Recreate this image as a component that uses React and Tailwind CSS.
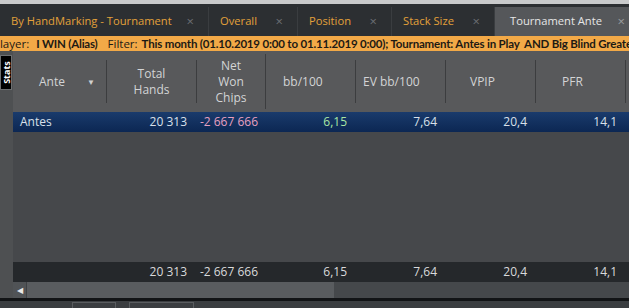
import React from "react";

const TABS = [
  { label: "By HandMarking - Tournament", w: 209 },
  { label: "Overall", w: 89 },
  { label: "Position", w: 94 },
  { label: "Stack Size", w: 103 },
];

function Close({ active }) {
  return (
    <span className={`text-[13px] leading-none ${active ? "text-[#9a9c9e]" : "text-[#6b6e72]"}`}>×</span>
  );
}

function ValueRow({ className, label, net, bb }) {
  return (
    <div className={`flex h-5 items-center text-[12px] ${className}`}>
      <div className="w-[94px] pl-[7px]">{label}</div>
      <div className="w-[90px] pr-[10px] text-right">20 313</div>
      <div className="w-[69px] pr-[8px] text-right" style={{ color: net }}>-2 667 666</div>
      <div className="w-[90px] pr-[9px] text-right" style={{ color: bb }}>6,15</div>
      <div className="w-[90px] pr-[9px] text-right">7,64</div>
      <div className="w-[90px] pr-[9px] text-right">20,4</div>
      <div className="w-[90px] pr-[9px] text-right">14,1</div>
    </div>
  );
}

export default function App() {
  return (
    <div className="flex h-[308px] w-[629px] flex-col overflow-hidden bg-[#4e5052] font-['Open_Sans',sans-serif]">
      <div className="h-[4px] bg-[#c9cacb]" />

      <div className="flex h-[32px] items-end bg-[#2c2f32]">
        {TABS.map((t) => (
          <div
            key={t.label}
            style={{ width: t.w }}
            className="flex h-[29px] items-center justify-between border-r border-[#3a3d40] pl-[11px] pr-[14px] text-[11.2px] text-[#e3a13a]"
          >
            <span className="whitespace-nowrap">{t.label}</span>
            <Close />
          </div>
        ))}
        <div className="flex h-[29px] flex-1 items-center justify-between bg-[#55575a] pl-[15px] pr-[4px] text-[11.2px] text-[#e6e6e6]">
          <span className="whitespace-nowrap">Tournament Ante</span>
          <Close active />
        </div>
      </div>

      <div className="flex h-[15px] items-center overflow-hidden whitespace-nowrap bg-[#f2a947] leading-none text-[#1d1a14]">
        <span className="-ml-[7px] shrink-0 text-[11.5px]">Player:</span>
        <b className="ml-[7px] shrink-0 font-['Lato',sans-serif] text-[11.5px] tracking-[-0.2px]">I WIN (Alias)</b>
        <span className="ml-[10px] shrink-0 text-[11.5px]">Filter:</span>
        <b className="ml-[4px] shrink-0 font-['Lato',sans-serif] text-[11.5px] tracking-[-0.18px]">
          This month (01.10.2019 0:00 to 01.11.2019 0:00); Tournament: Antes in Play&nbsp; AND Big Blind Greater
        </b>
      </div>

      <div className="flex flex-1">
        <div className="w-[13px] shrink-0 pt-[4px]">
          <div className="flex h-[35px] w-[12px] items-center justify-center border border-[#6d6f71] bg-black">
            <span className="-rotate-90 text-[9px] font-bold leading-none text-white">Stats</span>
          </div>
        </div>

        <div className="flex flex-1 flex-col">
          <div className="flex h-[61px] bg-[#58595b] text-[12px] leading-[16px] text-[#d3d4d5]">
            <div className="my-[9px] flex w-[94px] items-center justify-between border-r border-[#3c3d3f] pl-[26px] pr-[11px]">
              <span>Ante</span>
              <span className="text-[8px] text-[#d0d0d0]">▼</span>
            </div>
            <div className="my-[9px] flex w-[90px] items-center justify-center border-r border-[#3c3d3f] text-center">
              Total<br />Hands
            </div>
            <div className="my-[3px] flex w-[69px] items-center justify-center border-r border-[#3c3d3f] text-center">
              Net<br />Won<br />Chips
            </div>
            <div className="my-[9px] flex w-[90px] items-center border-r border-[#3c3d3f] pl-[17px]">bb/100</div>
            <div className="my-[9px] flex w-[90px] items-center border-r border-[#3c3d3f] pl-[7px]">EV bb/100</div>
            <div className="my-[9px] flex w-[90px] items-center border-r border-[#3c3d3f] pl-[24px]">VPIP</div>
            <div className="my-[9px] flex w-[90px] items-center border-r border-[#3c3d3f] pl-[26px]">PFR</div>
            <div className="flex-1" />
          </div>

          <ValueRow
            className="bg-gradient-to-b from-[#1a3b6c] to-[#0c2753] text-[#d9e0ea]"
            label="Antes"
            net="#e7a0c0"
            bb="#a9e6a4"
          />

          <div className="flex-1 bg-[#46484b]" />

          <ValueRow className="bg-[#25282b] text-[#d9dadb]" label="" />

          <div className="flex h-[16px] bg-[#45484b]">
            <div className="flex w-[13px] items-center justify-center bg-[#505356]">
              <span className="text-[8px] text-[#e8e8e8]">◀</span>
            </div>
            <div className="w-[308px] border-l border-[#3e4144] bg-[#595c5f]" />
          </div>
        </div>
      </div>

      <div className="h-[3px] bg-[#121416]" />
      <div className="flex h-[7px] gap-[13px] bg-[#3b3e41] pl-[72px] pt-[1px]">
        <div className="w-[44px] border-x border-t border-[#5a5d60]" />
        <div className="w-[65px] border-x border-t border-[#5a5d60]" />
      </div>
    </div>
  );
}
